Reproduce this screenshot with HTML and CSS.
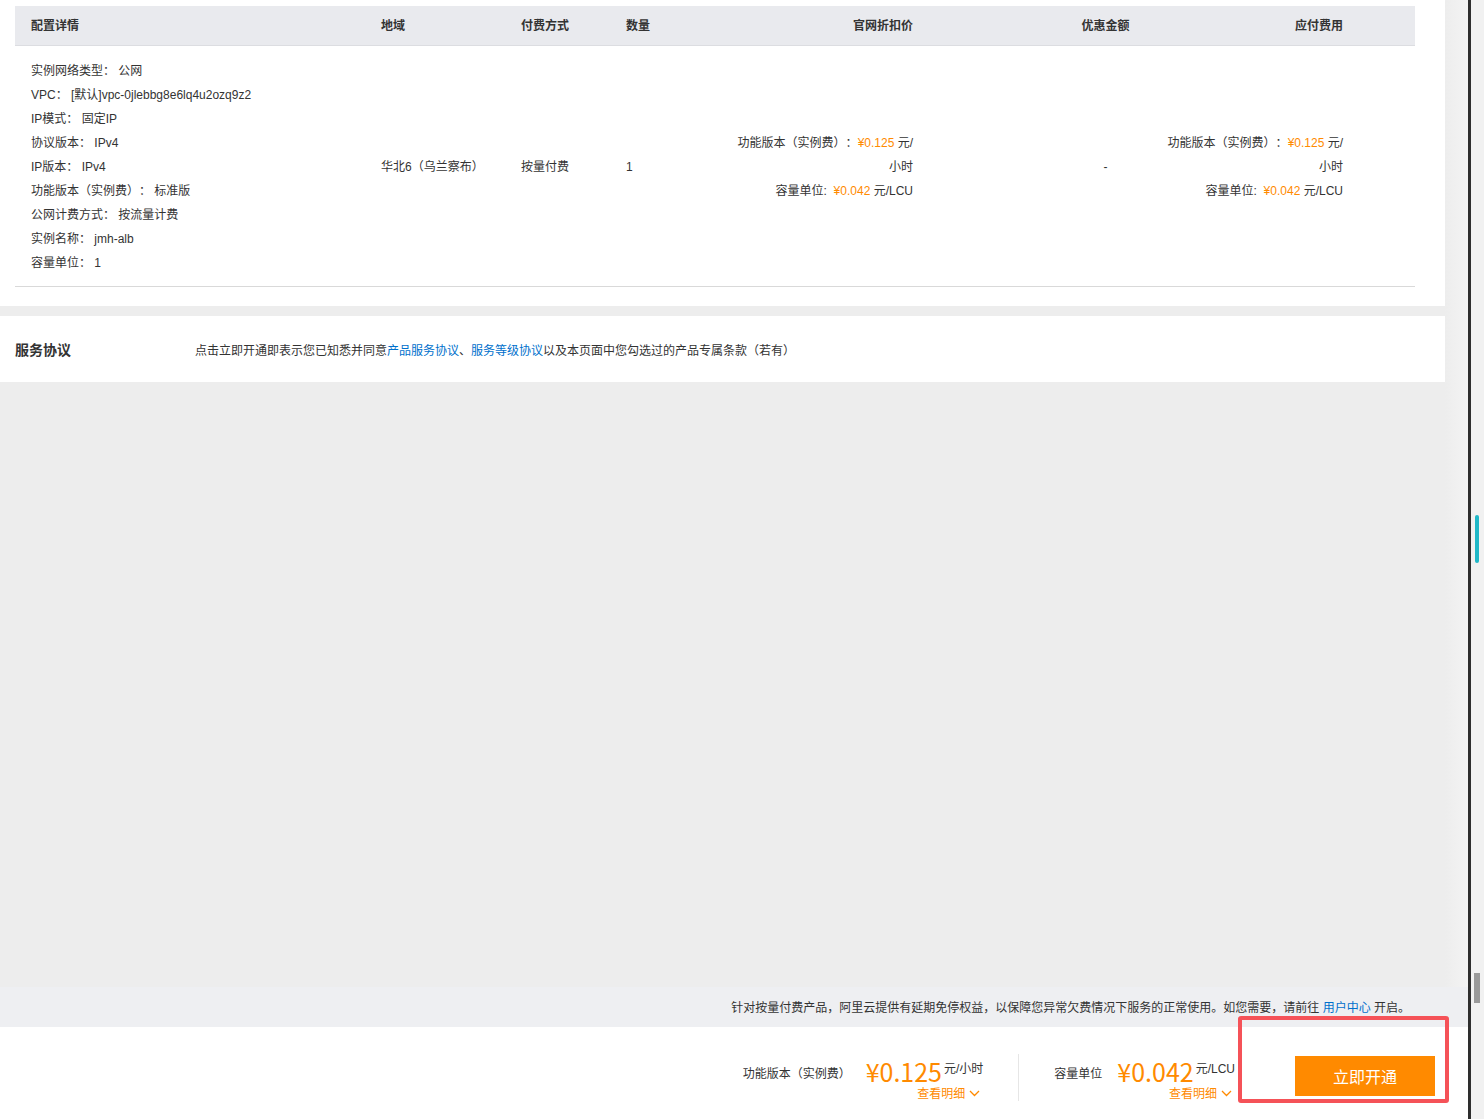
FILE: index.html
```html
<!DOCTYPE html>
<html lang="zh-CN">
<head>
<meta charset="utf-8">
<title>确认订单</title>
<link rel="stylesheet" href="styles.css">
</head>
<body>
<div class="page">
  <div class="content">
    <div class="card-table">
      <div class="grid thead">
        <div class="c cl">配置详情</div>
        <div class="c cl">地域</div>
        <div class="c cl">付费方式</div>
        <div class="c cl">数量</div>
        <div class="c cr">官网折扣价</div>
        <div class="c cm">优惠金额</div>
        <div class="c cr">应付费用</div>
        <div class="c"></div>
      </div>
      <div class="grid tbody">
        <div class="c cl cfg">
          <div>实例网络类型： 公网</div>
          <div>VPC： [默认]vpc-0jlebbg8e6lq4u2ozq9z2</div>
          <div>IP模式： 固定IP</div>
          <div>协议版本： IPv4</div>
          <div>IP版本： IPv4</div>
          <div>功能版本（实例费）： 标准版</div>
          <div>公网计费方式： 按流量计费</div>
          <div>实例名称： jmh-alb</div>
          <div>容量单位： 1</div>
        </div>
        <div class="c cl">华北6（乌兰察布）</div>
        <div class="c cl">按量付费</div>
        <div class="c cl">1</div>
        <div class="c cr">
          <div>功能版本（实例费）：<span class="orange">¥0.125</span> 元/</div>
          <div>小时</div>
          <div>容量单位:&nbsp; <span class="orange">¥0.042</span> 元/LCU</div>
        </div>
        <div class="c cm">-</div>
        <div class="c cr">
          <div>功能版本（实例费）：<span class="orange">¥0.125</span> 元/</div>
          <div>小时</div>
          <div>容量单位:&nbsp; <span class="orange">¥0.042</span> 元/LCU</div>
        </div>
        <div class="c"></div>
      </div>
    </div>
    <div class="card-service">
      <div class="svc-title">服务协议</div>
      <div class="svc-text">点击立即开通即表示您已知悉并同意<a class="link">产品服务协议</a>、<a class="link">服务等级协议</a>以及本页面中您勾选过的产品专属条款（若有）</div>
    </div>
  </div>
  <div class="notice">针对按量付费产品，阿里云提供有延期免停权益，以保障您异常欠费情况下服务的正常使用。如您需要，请前往 <a class="link">用户中心</a> 开启。</div>
  <div class="bottom-bar">
    <div class="fee-group">
      <div class="fee-label">功能版本（实例费）</div>
      <div class="fee-col">
        <div class="fee-row"><span class="amount">¥0.125</span><span class="unit">元/小时</span></div>
        <div class="detail">查看明细<svg class="chev" width="11" height="7" viewBox="0 0 11 7"><polyline points="1,1 5.5,5.5 10,1" fill="none" stroke="#ff8a00" stroke-width="1.3"/></svg></div>
      </div>
    </div>
    <div class="divider"></div>
    <div class="fee-group">
      <div class="fee-label">容量单位</div>
      <div class="fee-col">
        <div class="fee-row"><span class="amount">¥0.042</span><span class="unit">元/LCU</span></div>
        <div class="detail">查看明细<svg class="chev" width="11" height="7" viewBox="0 0 11 7"><polyline points="1,1 5.5,5.5 10,1" fill="none" stroke="#ff8a00" stroke-width="1.3"/></svg></div>
      </div>
    </div>
    <button class="btn-open">立即开通</button>
  </div>
</div>
<div class="scrollbar">
  <div class="thumb"></div>
  <div class="thumb2"></div>
</div>
<div class="highlight"></div>
</body>
</html>
```
FILE: styles.css
```css
* { box-sizing: border-box; }
html, body {
  margin: 0;
  padding: 0;
}
body {
  width: 1484px;
  height: 1119px;
  overflow: hidden;
  display: flex;
  position: relative;
  font-family: "Liberation Sans", "Noto Sans CJK SC", sans-serif;
  font-size: 12px;
  color: #333;
  background: #ededed;
  text-spacing-trim: space-all;
}
.page {
  width: 1468px;
  height: 1119px;
  display: flex;
  flex-direction: column;
  background: #ededed;
}
.content {
  flex: 1;
  background: linear-gradient(to right, #ededed 1445px, #f3f3f3 1468px);
}
.card-table {
  width: 1445px;
  background: #fff;
  padding: 6px 30px 19px 15px;
}
.grid {
  display: grid;
  grid-template-columns: 350px 140px 105px 114px 205px 221px 209px 56px;
}
.thead {
  background: #e9eaee;
  border-bottom: 1px solid #dcdde1;
  height: 40px;
  font-weight: bold;
  color: #333;
}
.thead .c {
  line-height: 40px;
}
.cl { padding-left: 16px; }
.cr { text-align: right; padding-right: 16px; }
.cm { text-align: center; padding-left: 132px; }
.tbody {
  border-bottom: 1px solid #d9d9d9;
}
.tbody .c {
  align-self: center;
  line-height: 24px;
  padding-top: 2px;
}
.tbody .cfg {
  padding-top: 13px;
  padding-bottom: 11px;
}
.orange { color: #ff8a00; }
.link { color: #0070cc; text-decoration: none; cursor: pointer; }

.card-service {
  width: 1445px;
  height: 66px;
  margin-top: 10px;
  background: #fff;
  display: flex;
  align-items: center;
  padding-left: 15px;
}
.svc-title {
  width: 180px;
  font-size: 14px;
  font-weight: bold;
  color: #333;
}
.svc-text { font-size: 12px; }

.notice {
  height: 40px;
  line-height: 42px;
  background: #eeeff2;
  text-align: right;
  padding-right: 58px;
}
.bottom-bar {
  height: 92px;
  background: #fff;
  display: flex;
  justify-content: flex-end;
  align-items: flex-start;
  padding-right: 33px;
}
.fee-group {
  display: flex;
  align-items: flex-start;
  gap: 15px;
  margin-top: 32px;
}
.fee-label {
  line-height: 30px;
  font-size: 12px;
  color: #333;
}
.fee-col {
  display: flex;
  flex-direction: column;
  align-items: flex-end;
}
.fee-row {
  display: flex;
  align-items: flex-start;
  height: 24px;
}
.amount {
  font-family: "Noto Sans CJK SC", sans-serif;
  font-size: 25px;
  line-height: 24px;
  color: #ff8a00;
}
.unit {
  font-size: 12px;
  line-height: 14px;
  margin-left: 2px;
  margin-top: 3px;
  color: #333;
}
.detail {
  color: #ff8a00;
  line-height: 14px;
  margin-top: 4px;
  display: flex;
  align-items: center;
  padding-right: 3px;
}
.chev { margin-left: 4px; margin-bottom: 2px; }
.divider {
  width: 1px;
  height: 47px;
  background: #e6e6e6;
  margin: 27px 35px 0 35px;
}
.btn-open {
  margin-top: 29px;
  margin-left: 60px;
  width: 140px;
  height: 40px;
  border: none;
  background: #ff8a00;
  color: #fff;
  font-family: "Noto Sans CJK SC", sans-serif;
  font-size: 16px;
  padding: 0;
}
.scrollbar {
  width: 16px;
  height: 1119px;
  border-left: 3px solid #2e2e2e;
  background: #f1f1f1;
  padding-top: 515px;
}
.thumb {
  width: 4px;
  height: 48px;
  margin-left: 4px;
  background: #1fb8c8;
  border-radius: 2px;
}
.thumb2 {
  width: 6px;
  height: 30px;
  margin-left: 3px;
  margin-top: 410px;
  background: #9a9a9a;
}
.highlight {
  position: absolute;
  left: 1238px;
  top: 1016px;
  width: 211px;
  height: 87px;
  border: 4px solid #f55258;
  border-radius: 3px;
  pointer-events: none;
}
```
